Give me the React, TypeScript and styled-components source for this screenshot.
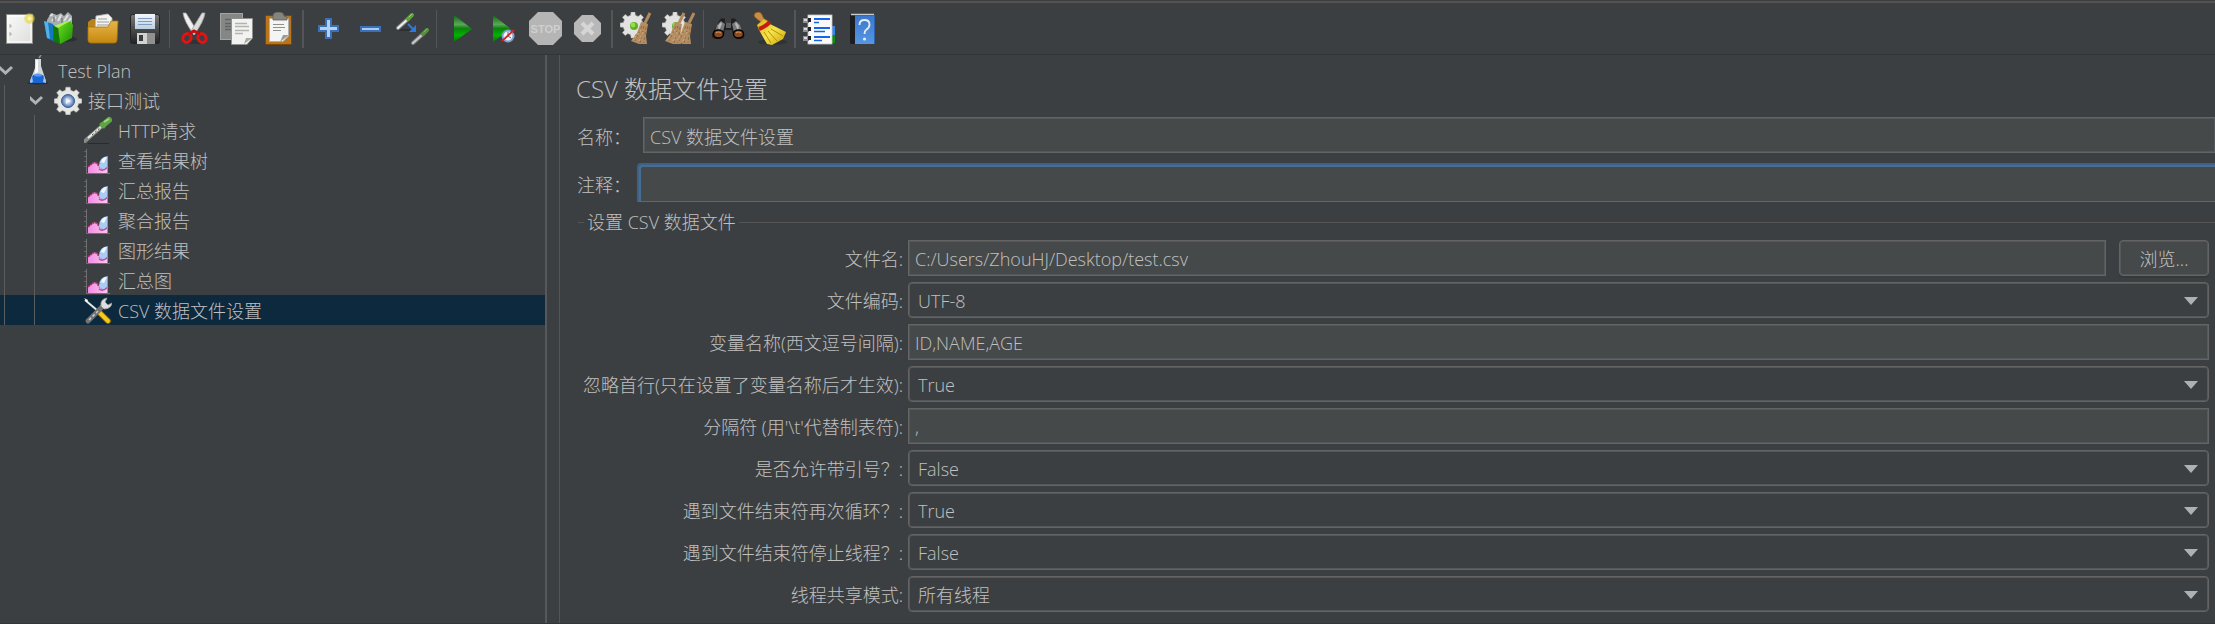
import React from "react";
import styled, { createGlobalStyle } from "styled-components";

const color = {
  bg: "#3c3f41",
  field: "#45494a",
  text: "#c0c0c0",
  border: "#646464",
  inner: "#54585a",
  line: "#555555",
  dark: "#323436",
  selected: "#0d293e",
  focusOuter: "#3d6185",
  focus: "#466d94",
};

const GlobalStyle = createGlobalStyle`
  *, *::before, *::after { box-sizing: border-box; }
  body {
    margin: 0;
    background: ${color.bg};
    color: ${color.text};
    font-family: "Open Sans", "Noto Sans CJK SC", sans-serif;
    font-size: 18px;
    font-weight: 300;
    line-height: 24px;
  }
  input, select, button { font: inherit; color: inherit; }
`;

/* ---------- page frame ---------- */

const Page = styled.div`
  display: flex;
  flex-direction: column;
  min-height: 100vh;
  padding-top: 1px;
  overflow: hidden;
  border-bottom: 1px solid ${color.dark};
`;

const Toolbar = styled.header`
  display: flex;
  align-items: center;
  gap: 7px;
  padding: 7px 0 6px 2px;
  border-top: 2px solid #555250;
  border-bottom: 1px solid ${color.dark};
`;

const ToolGroup = styled.div`
  display: flex;
  gap: 8px;
`;

const ToolButton = styled.button`
  display: block;
  width: 34px;
  height: 34px;
  padding: 0;
  border: 0;
  background: none;
`;

const Separator = styled.span<{ $wide?: boolean }>`
  width: ${(p) => (p.$wide ? 2 : 1)}px;
  height: 38px;
  background: ${color.line};
`;

const Body = styled.div`
  display: flex;
  flex: 1;
`;

const TreePanel = styled.nav`
  flex: none;
  width: 547px;
  border-right: 2px solid #58585a;
`;

const Content = styled.main`
  flex: 1;
  min-width: 0;
  margin-left: 12px;
  padding-bottom: 11px;
  border-left: 1px solid ${color.line};
`;

/* ---------- tree ---------- */

const TreeList = styled.ul`
  list-style: none;
  margin: 0;
  padding: 0;
`;

const TreeRow = styled.li<{ $selected?: boolean }>`
  display: flex;
  height: 30px;
  line-height: 32px;
  white-space: nowrap;
  background: ${(p) => (p.$selected ? color.selected : "transparent")};
`;

const Guide = styled.span`
  width: 26px;
  margin-left: 4px;
  border-left: 1px solid #5a5d5f;
`;

const Toggle = styled.button`
  width: 24px;
  padding: 0;
  border: 0;
  background: none;
  line-height: 0;
`;

const ToggleSpace = styled.span`
  width: 24px;
`;

const TreeIcon = styled.span`
  width: 28px;
  height: 30px;
  margin-right: 6px;
  line-height: 0;
`;

/* ---------- form ---------- */

const Title = styled.h1`
  margin: 18px 0 12px 16px;
  font-size: 24px;
  font-weight: 300;
  line-height: 32px;
`;

const HeaderRow = styled.div`
  display: flex;
  align-items: center;
  margin-bottom: 10px;
  padding-left: 17px;
`;

const CommentRow = styled(HeaderRow)`
  margin-bottom: 0;
`;

const HeaderLabel = styled.label`
  flex: none;
  width: 66px;
  padding-top: 4px;
`;

const TextField = styled.input`
  flex: 1;
  min-width: 0;
  width: 100%;
  height: 36px;
  padding: 2px 6px 0;
  border: 1px solid ${color.border};
  border-radius: 0;
  box-shadow: inset 0 0 0 1px ${color.inner};
  background: ${color.field};
  outline: none;
`;

const NameField = styled(TextField)`
  border-right: 0;
`;

const CommentField = styled(TextField)`
  height: 39px;
  margin-left: -6px;
  border: 2px solid ${color.focusOuter};
  border-width: 2px 0 1px 2px;
  border-bottom-color: ${color.focus};
  border-radius: 4px 0 0 0;
  box-shadow: inset 2px 2px 0 0 ${color.focus};
`;

const Settings = styled.fieldset`
  min-width: 0;
  margin: 8px 0 0 18px;
  padding: 6px 6px 0 0;
  border: 0;
  border-top: 1px solid ${color.line};
`;

const Legend = styled.legend`
  margin-left: 6px;
  padding: 0 3px;
`;

const FormGrid = styled.div`
  display: grid;
  grid-template-columns: 325px minmax(0, 1fr);
  column-gap: 5px;
  row-gap: 6px;
  align-items: center;
`;

const FieldLabel = styled.label`
  padding-top: 2px;
  text-align: right;
  white-space: nowrap;
`;

const FileRow = styled.div`
  display: flex;
  gap: 13px;
`;

const BrowseButton = styled.button`
  flex: none;
  width: 90px;
  height: 36px;
  padding: 2px 0 0;
  border: 1px solid ${color.border};
  border-radius: 4px;
  box-shadow: inset 0 0 0 1px ${color.inner}, 0 2px 0 #36393a;
  background: ${color.field};
`;

const SelectBox = styled.div`
  position: relative;
`;

const Select = styled.select`
  display: block;
  width: 100%;
  height: 36px;
  padding: 2px 36px 0 9px;
  appearance: none;
  border: 1px solid ${color.border};
  border-radius: 4px;
  box-shadow: inset 0 0 0 1px ${color.inner};
  background: ${color.bg};
  outline: none;
`;

const SelectArrow = styled.svg`
  position: absolute;
  top: 15px;
  right: 11px;
  pointer-events: none;
`;

/* ---------- drawings ---------- */

function gearPath(cx: number, cy: number, outer: number, inner: number, teeth = 8) {
  const pts: string[] = [];
  const step = (Math.PI * 2) / teeth;
  for (let i = 0; i < teeth; i++) {
    const a = i * step - Math.PI / 2;
    [
      [inner, -0.3],
      [outer, -0.19],
      [outer, 0.19],
      [inner, 0.3],
    ].forEach(([r, k]) => {
      pts.push(`${(cx + r * Math.cos(a + k * step)).toFixed(1)} ${(cy + r * Math.sin(a + k * step)).toFixed(1)}`);
    });
  }
  return `M${pts.join("L")}Z`;
}

const DefsSvg = styled.svg`
  display: block;
`;

const Gradients = () => (
  <DefsSvg width="0" height="0" aria-hidden="true">
    <defs>
      <linearGradient id="paper" x1="0" y1="0" x2="1" y2="1">
        <stop offset="0" stopColor="#fafafa" />
        <stop offset="1" stopColor="#dededc" />
      </linearGradient>
      <linearGradient id="folder" x1="0" y1="0" x2="0" y2="1">
        <stop offset="0" stopColor="#e8b548" />
        <stop offset="1" stopColor="#c58810" />
      </linearGradient>
      <linearGradient id="steel" x1="0" y1="0" x2="0" y2="1">
        <stop offset="0" stopColor="#77797b" />
        <stop offset="0.5" stopColor="#4a4b4d" />
        <stop offset="1" stopColor="#222325" />
      </linearGradient>
      <linearGradient id="label" x1="0" y1="0" x2="0" y2="1">
        <stop offset="0" stopColor="#f2f7fb" />
        <stop offset="1" stopColor="#bccfe2" />
      </linearGradient>
      <linearGradient id="play" x1="0" y1="0" x2="0" y2="1">
        <stop offset="0" stopColor="#0a6a0a" />
        <stop offset="0.35" stopColor="#58a858" />
        <stop offset="0.5" stopColor="#0b820b" />
        <stop offset="0.75" stopColor="#00b400" />
        <stop offset="1" stopColor="#067006" />
      </linearGradient>
      <linearGradient id="yellow" x1="0" y1="0" x2="1" y2="1">
        <stop offset="0" stopColor="#d8b414" />
        <stop offset="0.5" stopColor="#f7e34e" />
        <stop offset="1" stopColor="#c9a200" />
      </linearGradient>
      <linearGradient id="blue" x1="0" y1="0" x2="0" y2="1">
        <stop offset="0" stopColor="#3a78cc" />
        <stop offset="1" stopColor="#5796e4" />
      </linearGradient>
      <linearGradient id="green" x1="0" y1="0" x2="1" y2="1">
        <stop offset="0" stopColor="#6fe01c" />
        <stop offset="1" stopColor="#168c06" />
      </linearGradient>
      <radialGradient id="orb">
        <stop offset="0" stopColor="#e4ecf6" />
        <stop offset="0.5" stopColor="#a3bbdd" />
        <stop offset="1" stopColor="#446aa4" />
      </radialGradient>
      <radialGradient id="glow">
        <stop offset="0" stopColor="#fffce0" />
        <stop offset="0.5" stopColor="#efe05c" />
        <stop offset="1" stopColor="#d8c84a" stopOpacity="0.3" />
      </radialGradient>
      <linearGradient id="pink" x1="0" y1="0" x2="1" y2="0">
        <stop offset="0" stopColor="#f08ce8" />
        <stop offset="1" stopColor="#ffc8e6" />
      </linearGradient>
    </defs>
  </DefsSvg>
);

const Pipette = ({ faded }: { faded?: boolean }) => (
  <g opacity={faded ? 0.8 : 1} strokeLinecap="round">
    <path d="M0 14L10 5" stroke="#8a8c8a" strokeWidth="4" />
    <path d="M0 14L10 5" stroke="#eeeeea" strokeWidth="2" />
    <path d="M10 5L14 1" stroke="#5fa13a" strokeWidth="4" />
    <path d="M11 3L14 0" stroke="#9fd07c" strokeWidth="1" />
  </g>
);

const PlayShape = ({ x }: { x: number }) => (
  <path d={`M${x} 3L${x + 18} 17L${x} 30Z`} fill="url(#play)" />
);

const SweepBroom = ({ x }: { x: number }) => (
  <g>
    <path d={`M${x + 20} 1L${x + 15} 11`} stroke="#b08a5c" strokeWidth="3" />
    <path d={`M${x + 11} 10L${x + 18} 12L${x + 16} 24L${x + 17} 32L${x + 9} 32L${x + 1} 29L${x + 7} 21Z`} fill="#b58d62" />
    <path
      d={`M${x + 12} 14L${x + 5} 29M${x + 14} 14L${x + 10} 31M${x + 16} 15L${x + 14} 31`}
      stroke="#8f6c42"
      strokeWidth="1"
      strokeDasharray="3 2"
    />
    <path d={`M${x + 11} 18L${x + 3} 28M${x + 13} 20L${x + 8} 31`} stroke="#d5b083" strokeWidth="1" strokeDasharray="2 2" />
  </g>
);

const SmallGear = () => (
  <g>
    <path d={gearPath(13, 13, 13, 10)} fill="#e2e2e0" stroke="#b8b8b6" strokeWidth="0.6" />
    <circle cx="14" cy="14" r="4" fill="#5fb022" />
    <circle cx="13" cy="13" r="2.4" fill="#95dc4c" />
  </g>
);

const toolArt: Record<string, React.ReactNode> = {
  New: (
    <>
      <rect x="4.5" y="2.5" width="26" height="29" fill="url(#paper)" stroke="#8c8c88" />
      <rect x="6" y="4" width="23" height="26" fill="none" stroke="#fff" />
      <path d="M7 13h2v2h-2M7 21h2v2h-2" stroke="#aaa" fill="none" />
      <circle cx="27.5" cy="6.5" r="5.5" fill="url(#glow)" />
    </>
  ),
  Templates: (
    <>
      <ellipse cx="22" cy="27" rx="11" ry="3" fill="#2d3032" />
      <path d="M3 8L7 1L13 3L17 1L20 4L24 0L28 4L28 13L14 15L3 11Z" fill="#a9adaf" />
      <path d="M6 4L9 2M8 9L12 5M14 9L17 3M20 9L24 3M23 12L27 6" stroke="#dfe2e4" strokeWidth="2" />
      <path d="M10 10V5M18 12V6" stroke="#787c7f" strokeWidth="1.5" />
      <path d="M0 9L9 12L11 30L3 26Z" fill="#1478c0" />
      <path d="M0 9L4 10L6 27L3 26Z" fill="#53b0ea" />
      <path d="M10 14L14 16L16 32L9 29Z" fill="#0f7a08" />
      <path d="M14 15L26 9L29 13L28 26L16 32Z" fill="url(#green)" />
      <path d="M10 14L23 9L26 9L14 16Z" fill="#a8f060" />
    </>
  ),
  Open: (
    <>
      <path d="M2 10L6 7H12L14 12H28L31 9V26H2Z" fill="#b9821c" />
      <path d="M10 4L22 2L26 6V19H9Z" fill="#f4f4f2" stroke="#b9b9b5" strokeWidth="0.8" />
      <path d="M12 7H21M11 10H23M11 13H23" stroke="#9b9d9a" />
      <path d="M2 15H22L25 9H32L31 28Q31 31 28 31H5Q2 31 2 28Z" fill="url(#folder)" stroke="#a8740e" strokeWidth="0.8" />
    </>
  ),
  Save: (
    <>
      <rect x="2.5" y="2.5" width="29" height="29" rx="2" fill="url(#steel)" stroke="#222" />
      <rect x="7" y="2" width="20" height="15" fill="url(#label)" />
      <path d="M10 6.5H24M10 9.5H24M10 12.5H24" stroke="#7d9cc0" strokeWidth="1.2" />
      <rect x="9" y="21" width="18" height="11" fill="#d2d3d1" />
      <rect x="11" y="23" width="4" height="6" fill="#3a3b3c" />
      <rect x="19" y="21" width="8" height="11" fill="#8f908f" />
    </>
  ),
  Cut: (
    <>
      <ellipse cx="17" cy="30" rx="12" ry="2" fill="#303335" />
      <path d="M6 1L9 1L20 19L17 23Q7 9 6 1Z" fill="#f0f0ee" stroke="#a6a6a4" strokeWidth="0.8" />
      <path d="M28 1L25 1L14 19L17 23Q27 9 28 1Z" fill="#dcdcda" stroke="#a6a6a4" strokeWidth="0.8" />
      <ellipse cx="10" cy="26" rx="4" ry="4.5" fill="none" stroke="#e01414" strokeWidth="3" transform="rotate(30 10 26)" />
      <ellipse cx="25" cy="26" rx="4" ry="4.5" fill="none" stroke="#e01414" strokeWidth="3" transform="rotate(-30 25 26)" />
      <path d="M12 22L17 19L23 22" stroke="#c40c0c" strokeWidth="3" fill="none" />
    </>
  ),
  Copy: (
    <>
      <rect x="1.5" y="1.5" width="22" height="26" fill="#858786" stroke="#a3a5a3" />
      <path d="M6 7.5H19M6 11.5H12M6 14.5H12M6 17.5H12" stroke="#616462" strokeWidth="1.5" />
      <path d="M12.5 6.5H33.5V26L28 32.5H12.5Z" fill="#f2f2f0" stroke="#8f918f" />
      <path d="M16 11.5H28M16 14.5H30M16 18.5H30M16 21.5H24" stroke="#b2b4b2" strokeWidth="1.5" />
      <path d="M25 32L27 26H33Z" fill="#a6a8a4" />
    </>
  ),
  Paste: (
    <>
      <rect x="4.5" y="3.5" width="26" height="29" rx="1" fill="#b9741c" stroke="#7a4606" />
      <path d="M8.5 6.5H27.5V24L22 29.5H8.5Z" fill="#f4f4f2" stroke="#b0b0ae" />
      <path d="M12 12.5H23M12 15.5H24M12 18.5H20" stroke="#8f918f" strokeWidth="1.2" />
      <path d="M19 30L22 23H28Z" fill="#9a9c98" />
      <path d="M12 8V4Q12 0 17.5 0Q23 0 23 4L26 5V8Z" fill="#84857e" stroke="#5e5f58" strokeWidth="0.8" />
    </>
  ),
  Expand: (
    <path
      d="M15 7H20V14H27V19H20V26H15V19H8V14H15Z"
      fill="#b3d0f3"
      stroke="#3a70b8"
      strokeWidth="2"
    />
  ),
  Collapse: <rect x="8" y="15" width="19" height="4" fill="#a9c9f2" stroke="#3a70b8" strokeWidth="2" />,
  Toggle: (
    <>
      <ellipse cx="11" cy="18" rx="8" ry="1" fill="#2d3032" />
      <g transform="translate(3 2)">
        <Pipette />
      </g>
      <g transform="translate(18 17)">
        <Pipette faded />
      </g>
      <path d="M13 12L18 17" stroke="#2a7ae4" strokeWidth="2" />
      <path d="M21 13V20H14Z" fill="#2a7ae4" />
    </>
  ),
  Start: <PlayShape x={10} />,
  "Start no pauses": (
    <>
      <PlayShape x={7} />
      <circle cx="22" cy="24" r="5.5" fill="#f2f5fa" stroke="#7f9fce" strokeWidth="2" />
      <path d="M22 20V24L25 26" stroke="#44608c" fill="none" />
      <path d="M16 29L28 18" stroke="#e02020" strokeWidth="1.8" />
    </>
  ),
  Stop: (
    <>
      <path d="M10 0H25L34 9V24L25 33H10L1 24V9Z" fill="#b5b5b5" />
      <text
        x="17.5"
        y="21"
        textAnchor="middle"
        fontFamily="Liberation Sans, sans-serif"
        fontSize="11"
        fontWeight="700"
        fill="#cfcfcf"
      >
        STOP
      </text>
    </>
  ),
  Shutdown: (
    <>
      <path d="M12 3H23L31 11V22L23 30H12L4 22V11Z" fill="#b8b8b8" />
      <path d="M12 11L23 22M23 11L12 22" stroke="#d6d6d6" strokeWidth="4" />
    </>
  ),
  Clear: (
    <>
      <SmallGear />
      <SweepBroom x={10} />
    </>
  ),
  "Clear All": (
    <>
      <SmallGear />
      <SweepBroom x={2} />
      <SweepBroom x={12} />
    </>
  ),
  Search: (
    <>
      <path d="M8 9Q10 5 14 7V11H20V7Q24 5 26 9L33 22Q35 27 28 27Q22 27 21 18H14Q13 27 6 27Q0 27 1 22Z" fill="#1f2021" />
      <path d="M6 13L10 9L14 12L12 20L4 19ZM29 13L25 9L21 12L23 20L31 19Z" fill="#77797b" />
      <path d="M7 14L10 10L11 12L8 19ZM28 14L25 10L24 12L27 19Z" fill="#b4b6b7" />
      <rect x="15" y="11" width="5" height="5" fill="#5c5e60" />
      <ellipse cx="7.5" cy="22" rx="5" ry="4" fill="#8b4a22" stroke="#000" strokeWidth="1.5" />
      <ellipse cx="27.5" cy="22" rx="5" ry="4" fill="#8b4a22" stroke="#000" strokeWidth="1.5" />
      <path d="M5 21Q7 19 10 21M25 21Q27 19 30 21" stroke="#d28c58" strokeWidth="1.2" fill="none" />
    </>
  ),
  "Reset Search": (
    <>
      <ellipse cx="20" cy="30" rx="15" ry="3" fill="#313436" />
      <path d="M1 3Q2 0 6 0Q9 1 10 5L12 8L8 10L4 7Q1 5 1 3Z" fill="#c98d4a" stroke="#8e5a20" strokeWidth="0.8" />
      <path d="M12 7L15 9L14 12Z" fill="#c98d4a" />
      <path d="M4 13L11 7L17 12L33 20L30 27L19 33L14 32L6 18Z" fill="url(#yellow)" />
      <path d="M11 20L18 31M15 19L24 29M18 17L30 24" stroke="#b99300" strokeWidth="1" />
      <path d="M6 17Q12 15 17 10" stroke="#c81a14" strokeWidth="4" fill="none" />
    </>
  ),
  Functions: (
    <>
      <rect x="27" y="14" width="5" height="9" fill="#3a84e8" />
      <rect x="27" y="23" width="5" height="8" fill="#0c8c10" />
      <rect x="5" y="3" width="24" height="29" fill="#fafafa" stroke="#c8c8c8" strokeWidth="0.8" />
      <path d="M11 7H27M11 16H27M11 25H27" stroke="#1664e8" strokeWidth="2" />
      <path d="M11 10.5H16M11 19.5H22M11 28.5H19" stroke="#1664e8" strokeWidth="1.5" />
      {[6, 15, 24].map((y) => (
        <g key={y}>
          <rect x="0" y={y} width="6" height="5" fill="#8c8e90" />
          <rect x="1" y={y + 1} width="3" height="2" fill="#d8dadb" />
          <rect x="5" y={y} width="3" height="4" fill="#222" />
        </g>
      ))}
    </>
  ),
  Help: (
    <>
      <path d="M5 3L10 2V32H6Q5 32 5 30Z" fill="#1c1d1f" />
      <path d="M6 2.5H29" stroke="#c9cccf" strokeWidth="1.5" />
      <rect x="10" y="4" width="20" height="28" fill="url(#blue)" />
      <path d="M29.5 3V32" stroke="#2c62ae" />
      <path d="M14.500 13Q14.500 8 19.500 8Q24.500 8 24.500 12.500Q24.500 16 21 18Q19.500 19 19.500 22" stroke="#e4ecf8" strokeWidth="1.800" fill="none" />
      <circle cx="19.500" cy="27" r="1.600" fill="#e4ecf8" />
    </>
  ),
};

const toolGroups: string[][] = [
  ["New", "Templates", "Open", "Save"],
  ["Cut", "Copy", "Paste"],
  ["Expand", "Collapse", "Toggle"],
  ["Start", "Start no pauses", "Stop", "Shutdown"],
  ["Clear", "Clear All"],
  ["Search", "Reset Search"],
  ["Functions", "Help"],
];

const treeArt: Record<string, React.ReactNode> = {
  plan: (
    <>
      <ellipse cx="14" cy="28" rx="11" ry="1.5" fill="#2a2c2e" />
      <path d="M15 3L17 0" stroke="#8d9092" strokeWidth="1.5" />
      <path d="M11 4H17V11L22 26Q22 28 20 28H8Q6 28 6 26L11 13Z" fill="#d2d6da" />
      <path d="M9 20H19L22 26Q22 28 20 28H8Q6 28 6 26Z" fill="#1a66d4" />
      <path d="M8 21L6 26V28L9 27ZM20 21L22 26V28L19 27Z" fill="#9cc4f4" />
      <path d="M12 5H14V17L11 19Z" fill="#fbfbfb" />
      <ellipse cx="14" cy="20" rx="4" ry="1.5" fill="#5c9cf0" />
    </>
  ),
  threads: (
    <>
      <path d={gearPath(14, 16, 14, 11)} fill="#e6e6e4" stroke="#bcbcba" strokeWidth="0.6" />
      <circle cx="14" cy="16" r="6.5" fill="url(#orb)" stroke="#3c5f96" />
      <path d="M12 13L17 16L12 19Z" fill="#f4f7fc" opacity="0.85" />
    </>
  ),
  sampler: (
    <>
      <path d="M4 28.5H25" stroke="#292b2d" />
      <path d="M1 26L18 11" stroke="#898b88" strokeWidth="4" strokeLinecap="round" />
      <path d="M4 23L18 11" stroke="#ecece8" strokeWidth="2" />
      <path d="M8 20L17 12" stroke="#50524f" strokeWidth="1" strokeDasharray="2 2" />
      <path d="M16 8L21 13" stroke="#3f8a26" strokeWidth="3" />
      <path d="M19 10L25 5" stroke="#5fa544" strokeWidth="6" strokeLinecap="round" />
      <path d="M20 7L25 4" stroke="#a2d883" strokeWidth="2" />
    </>
  ),
  listener: (
    <>
      <path d="M2.5 4V28.5H26" stroke="#6e7072" fill="none" />
      <path d="M0 6.5H2M0 11.5H2M0 16.5H2M0 21.5H2" stroke="#5f6163" />
      <path d="M4 28V22L8 19L10 17L13 18L16 23L18 24L24 20V28Z" fill="url(#pink)" />
      <path d="M4 22L8 19L11 17L14 20L16 23" stroke="#b03070" strokeWidth="1.5" fill="none" strokeDasharray="2 1" />
      <path d="M15 21Q15 12 24 11V24H19Q15 24 15 21Z" fill="#a9cbf4" />
      <path d="M17 17Q18 12 23 12L20 18Z" fill="#f2f7fd" />
      <path d="M15 24Q19 27 24 22" stroke="#b84ca8" strokeWidth="1.5" fill="none" />
      <path d="M23.5 11V28" stroke="#7d97b8" />
    </>
  ),
  config: (
    <>
      <path d="M1 5L14 16" stroke="#e8e8e6" strokeWidth="2" />
      <path d="M0 3L4 5L3 7Z" fill="#fff" />
      <path d="M15 17L24 26" stroke="#8a6400" strokeWidth="6" strokeLinecap="round" />
      <path d="M15 17L24 26" stroke="#f4c81c" strokeWidth="4" strokeLinecap="round" />
      <path d="M4 26L19 11" stroke="#707274" strokeWidth="5" strokeLinecap="round" />
      <path d="M5 25L14 16" stroke="#c8caca" strokeWidth="1.5" strokeDasharray="3 2" />
      <path d="M17 11Q16 4 23 3L21 7L24 10L28 8Q27 14 20 14Z" fill="#dededc" stroke="#9a9c9c" strokeWidth="0.8" />
    </>
  ),
};

const treeRows: { label: string; level: number; icon: string; open?: boolean; selected?: boolean }[] = [
  { label: "Test Plan", level: 0, icon: "plan", open: true },
  { label: "接口测试", level: 1, icon: "threads", open: true },
  { label: "HTTP请求", level: 2, icon: "sampler" },
  { label: "查看结果树", level: 2, icon: "listener" },
  { label: "汇总报告", level: 2, icon: "listener" },
  { label: "聚合报告", level: 2, icon: "listener" },
  { label: "图形结果", level: 2, icon: "listener" },
  { label: "汇总图", level: 2, icon: "listener" },
  { label: "CSV 数据文件设置", level: 2, icon: "config", selected: true },
];

type Field = { id: string; label: string; value: string; kind: "file" | "text" | "select"; options?: string[] };

const fields: Field[] = [
  { id: "file", label: "文件名:", value: "C:/Users/ZhouHJ/Desktop/test.csv", kind: "file" },
  { id: "encoding", label: "文件编码:", value: "UTF-8", kind: "select" },
  { id: "names", label: "变量名称(西文逗号间隔):", value: "ID,NAME,AGE", kind: "text" },
  { id: "skip", label: "忽略首行(只在设置了变量名称后才生效):", value: "True", kind: "select", options: ["True", "False"] },
  { id: "delimiter", label: "分隔符 (用'\\t'代替制表符):", value: ",", kind: "text" },
  { id: "quoted", label: "是否允许带引号？:", value: "False", kind: "select", options: ["True", "False"] },
  { id: "recycle", label: "遇到文件结束符再次循环？:", value: "True", kind: "select", options: ["True", "False"] },
  { id: "stop", label: "遇到文件结束符停止线程？:", value: "False", kind: "select", options: ["True", "False"] },
  { id: "share", label: "线程共享模式:", value: "所有线程", kind: "select" },
];

function FieldControl({ field }: { field: Field }) {
  if (field.kind === "select") {
    return (
      <SelectBox>
        <Select id={field.id} defaultValue={field.value}>
          {(field.options ?? [field.value]).map((o) => (
            <option key={o}>{o}</option>
          ))}
        </Select>
        <SelectArrow width="14" height="8" viewBox="0 0 14 8" aria-hidden="true">
          <path d="M0 0H14L7 8Z" fill="#b0b0b4" />
        </SelectArrow>
      </SelectBox>
    );
  }
  if (field.kind === "file") {
    return (
      <FileRow>
        <TextField id={field.id} type="text" defaultValue={field.value} />
        <BrowseButton type="button">浏览...</BrowseButton>
      </FileRow>
    );
  }
  return <TextField id={field.id} type="text" defaultValue={field.value} />;
}

export default function App() {
  return (
    <>
      <GlobalStyle />
      <Page>
        <Toolbar>
          {toolGroups.map((group, i) => (
            <React.Fragment key={group[0]}>
              {i > 0 && <Separator $wide={i % 2 === 0} />}
              <ToolGroup>
                {group.map((name) => (
                  <ToolButton key={name} type="button" aria-label={name}>
                    <svg width="34" height="34" viewBox="0 0 34 34" fill="none" aria-hidden="true">
                      {toolArt[name]}
                    </svg>
                  </ToolButton>
                ))}
              </ToolGroup>
            </React.Fragment>
          ))}
        </Toolbar>
        <Body>
          <TreePanel>
            <TreeList>
              {treeRows.map((row) => (
                <TreeRow key={row.label} $selected={row.selected}>
                  {Array.from({ length: row.level }, (_, i) => (
                    <Guide key={i} />
                  ))}
                  {row.open ? (
                    <Toggle type="button" aria-label={`Collapse ${row.label}`}>
                      <svg width="24" height="30" viewBox="0 0 24 30" fill="none" aria-hidden="true">
                        <path d="M-1 12L5.5 18L12 12" stroke="#b0b2b4" strokeWidth="3" />
                      </svg>
                    </Toggle>
                  ) : (
                    <ToggleSpace />
                  )}
                  <TreeIcon>
                    <svg width="28" height="30" viewBox="0 0 28 30" fill="none" aria-hidden="true">
                      {treeArt[row.icon]}
                    </svg>
                  </TreeIcon>
                  {row.label}
                </TreeRow>
              ))}
            </TreeList>
          </TreePanel>
          <Content>
            <Title>CSV 数据文件设置</Title>
            <HeaderRow>
              <HeaderLabel htmlFor="name">名称：</HeaderLabel>
              <NameField id="name" type="text" defaultValue="CSV 数据文件设置" />
            </HeaderRow>
            <CommentRow>
              <HeaderLabel htmlFor="comment">注释：</HeaderLabel>
              <CommentField id="comment" type="text" />
            </CommentRow>
            <Settings>
              <Legend>设置 CSV 数据文件</Legend>
              <FormGrid>
                {fields.map((field) => (
                  <React.Fragment key={field.id}>
                    <FieldLabel htmlFor={field.id}>{field.label}</FieldLabel>
                    <FieldControl field={field} />
                  </React.Fragment>
                ))}
              </FormGrid>
            </Settings>
          </Content>
        </Body>
        <Gradients />
      </Page>
    </>
  );
}
